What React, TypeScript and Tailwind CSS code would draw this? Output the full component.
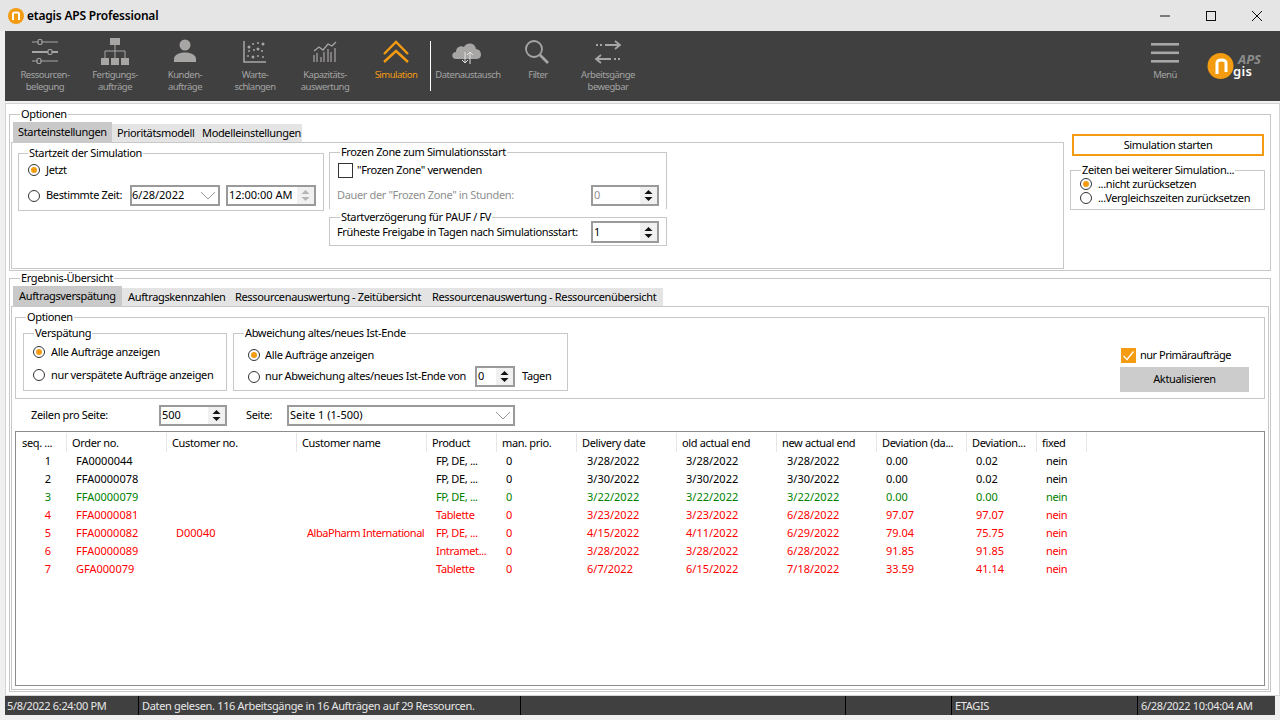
import React from "react";

const Radio = ({ on }: { on?: boolean }) => (
  <span className="w-[12px] h-[12px] shrink-0 rounded-full border border-[#333333] bg-white flex items-center justify-center">
    {on && <span className="w-[6px] h-[6px] rounded-full bg-[#f39c12]" />}
  </span>
);

const Group = ({ title, className, children, tx = "left-[10px]" }: { title: string; className: string; children?: React.ReactNode; tx?: string }) => (
  <div className={"relative border border-[#c8c8c8] " + className}>
    <span className={"absolute -top-[8px] bg-white px-[1px] leading-[14px] whitespace-nowrap " + tx}>{title}</span>
    {children}
  </div>
);

const Spin = ({ value, className, muted, time }: { value: string; className: string; muted?: boolean; time?: boolean }) => (
  <div className={"border-2 border-[#9a9a9a] bg-white flex items-stretch shrink-0 tracking-normal " + className}>
    <span className={"flex-1 pl-[1px] flex items-center whitespace-nowrap " + (muted ? "text-[#8f8f8f]" : "text-black")}>{value}</span>
    <span className="w-[17px] bg-[#f0f0f0] flex items-center justify-center">
      <svg width="9" height="13" viewBox="0 0 9 13">
        <path d="M4.5 1 L8.5 5 H0.5 Z M4.5 12 L8.5 8 H0.5 Z" fill={time ? "#b5b5b5" : "#111111"} />
      </svg>
    </span>
  </div>
);

const Chevron = () => (
  <svg width="16" height="9" viewBox="0 0 16 9" className="shrink-0">
    <path d="M1 1 L8 8 L15 1" fill="none" stroke="#9a9a9a" strokeWidth="1" />
  </svg>
);

const G = "#a8a5a5";

const icons: Record<string, React.ReactNode> = {
  sliders: (
    <g stroke={G} fill="none" strokeWidth="1.2">
      <path d="M7 5H13M17 5H33" />
      <rect x="13" y="2.5" width="4" height="5" rx="1.5" />
      <path d="M7 15H23M27 15H33" strokeWidth="1.8" />
      <rect x="23" y="12.5" width="4" height="5" rx="1.5" />
      <path d="M7 24H12M16 24H33" />
      <rect x="12" y="21.5" width="4" height="5" rx="1.5" />
    </g>
  ),
  org: (
    <g fill={G}>
      <rect x="15" y="1" width="10" height="7" />
      <rect x="6" y="21" width="8" height="7" />
      <rect x="16" y="21" width="8" height="7" />
      <rect x="26" y="21" width="8" height="7" />
      <path d="M20 8V21M10 21V14H30V21" fill="none" stroke={G} strokeWidth="1" />
    </g>
  ),
  person: (
    <g fill={G}>
      <circle cx="20" cy="8" r="5.5" />
      <path d="M9 25V22C9 18 14 15.5 20 15.5C26 15.5 31 18 31 22V25Z" />
    </g>
  ),
  scatter: (
    <g fill={G}>
      <path d="M9 4V25H31" fill="none" stroke={G} strokeWidth="1.5" />
      {[[14, 10], [18, 7], [23, 6], [28, 7], [14, 14], [19, 13], [23, 12], [27, 14], [13, 19], [18, 20], [23, 19], [28, 20]].map(([x, y], i) => (
        <circle key={i} cx={x} cy={y} r={i % 3 === 0 ? 1.5 : 1} />
      ))}
    </g>
  ),
  chart: (
    <g fill="none" stroke={G}>
      <path d="M9 14L14 10L18 13L23 7L27 9L31 5" strokeWidth="1.3" />
      <path d="M9 25V18M12 25V16M16 25V20M19 25V15M23 25V12M26 25V15M30 25V11" strokeWidth="1.2" />
    </g>
  ),
  sim: (
    <g fill="none" stroke="#f39c12" strokeWidth="2.4">
      <path d="M8 17L20 5L32 17" />
      <path d="M8 25L20 14L32 25" />
    </g>
  ),
  cloud: (
    <g>
      <path d="M8 22C3 22 3 15 8 15C8 10 13 8 16 10C18 5 27 5 28 12C34 12 35 22 29 22Z" fill={G} />
      <path d="M17 15V26M14 23L17 26L20 23M22 27V15M19 18L22 15L25 18" fill="none" stroke="#e0e0e0" strokeWidth="1" />
    </g>
  ),
  search: (
    <g fill="none" stroke={G}>
      <circle cx="16" cy="12" r="8" strokeWidth="1.8" />
      <path d="M22 18L30 26" strokeWidth="2.6" />
    </g>
  ),
  arrows: (
    <g fill="none" stroke={G} strokeWidth="1.8">
      <path d="M8 8H10M12 8H14M17 8H32M27 4L32 8L27 12" />
      <path d="M32 22H30M28 22H26M23 22H8M13 18L8 22L13 26" />
    </g>
  ),
  menu: (
    <g fill={G}>
      <rect x="6" y="6" width="28" height="2.6" />
      <rect x="6" y="14.5" width="28" height="2.6" />
      <rect x="6" y="23" width="28" height="2.6" />
    </g>
  ),
};

const Tool = ({ icon, label, active }: { icon: string; label: string[]; active?: boolean }) => (
  <div className="w-[70px] shrink-0 flex flex-col items-center">
    <svg width="40" height="30" viewBox="0 0 40 30">{icons[icon]}</svg>
    <div className={"mt-[2px] text-center text-[9.5px] leading-[12px] tracking-[-0.5px] " + (active ? "text-[#f39c12]" : "text-[#a3a3a3]")}>
      {label.map((l) => (
        <div key={l}>{l}</div>
      ))}
    </div>
  </div>
);

const Tab = ({ label, active, w }: { label: string; active?: boolean; w: string }) => (
  <div className={"flex items-center whitespace-nowrap " + w + (active ? " h-[20px] bg-[#c9c9c9]" : " h-[18px] bg-[#e4e4e4]")}>{label}</div>
);

const cols = ["seq. ...", "Order no.", "Customer no.", "Customer name", "Product", "man. prio.", "Delivery date", "old actual end", "new actual end", "Deviation (da...", "Deviation...", "fixed"];
const rows: { c: string; v: string[] }[] = [
  { c: "text-black", v: ["1", "FA0000044", "", "", "FP, DE, ...", "0", "3/28/2022", "3/28/2022", "3/28/2022", "0.00", "0.02", "nein"] },
  { c: "text-black", v: ["2", "FFA0000078", "", "", "FP, DE, ...", "0", "3/30/2022", "3/30/2022", "3/30/2022", "0.00", "0.02", "nein"] },
  { c: "text-[#008000]", v: ["3", "FFA0000079", "", "", "FP, DE, ...", "0", "3/22/2022", "3/22/2022", "3/22/2022", "0.00", "0.00", "nein"] },
  { c: "text-[#ff0000]", v: ["4", "FFA0000081", "", "", "Tablette", "0", "3/23/2022", "3/23/2022", "6/28/2022", "97.07", "97.07", "nein"] },
  { c: "text-[#ff0000]", v: ["5", "FFA0000082", "D00040", "AlbaPharm International", "FP, DE, ...", "0", "4/15/2022", "4/11/2022", "6/29/2022", "79.04", "75.75", "nein"] },
  { c: "text-[#ff0000]", v: ["6", "FFA0000089", "", "", "Intramet...", "0", "3/28/2022", "3/28/2022", "6/28/2022", "91.85", "91.85", "nein"] },
  { c: "text-[#ff0000]", v: ["7", "GFA000079", "", "", "Tablette", "0", "6/7/2022", "6/15/2022", "7/18/2022", "33.59", "41.14", "nein"] },
];
const grid = "grid grid-cols-[50px_100px_130px_130px_70px_80px_100px_100px_100px_90px_70px_50px] w-[1070px]";

const cellClass = (i: number) => {
  if (i === 0) return "text-right pr-[16px] tracking-normal";
  if (i === 3) return "pl-[10px] whitespace-nowrap tracking-[-0.45px]";
  if (i === 4 || i === 11) return "pl-[9px] whitespace-nowrap";
  if (i === 6 || i === 8) return "pl-[10px] whitespace-nowrap tracking-normal";
  return "pl-[9px] whitespace-nowrap tracking-normal";
};

export default function App() {
  return (
    <div className="w-[1280px] h-[720px] overflow-hidden bg-[#f0f0f0] text-[11px] tracking-[-0.35px] text-black font-['Noto_Sans',sans-serif]">
      {/* title bar */}
      <div className="h-[31px] bg-[#e5e5e5] flex items-center">
        <svg width="16" height="16" viewBox="0 0 16 16" className="ml-[8px]">
          <circle cx="8" cy="8" r="8" fill="#f39c12" />
          <path d="M5 12V5.5C5 4 11 4 11 5.5V12" fill="none" stroke="#ffffff" strokeWidth="2" />
        </svg>
        <span className="ml-[3px] text-[12px] font-semibold tracking-[-0.2px]">etagis APS Professional</span>
        <div className="ml-auto flex">
          <div className="w-[46px] h-[31px] flex items-center justify-center">
            <svg width="12" height="12" viewBox="0 0 12 12"><path d="M1 6H11" stroke="#111" strokeWidth="1" /></svg>
          </div>
          <div className="w-[46px] h-[31px] flex items-center justify-center">
            <svg width="12" height="12" viewBox="0 0 12 12"><rect x="1.5" y="1.5" width="9" height="9" fill="none" stroke="#111" strokeWidth="1" /></svg>
          </div>
          <div className="w-[46px] h-[31px] flex items-center justify-center">
            <svg width="12" height="12" viewBox="0 0 12 12"><path d="M1 1L11 11M11 1L1 11" stroke="#111" strokeWidth="1" /></svg>
          </div>
        </div>
      </div>

      {/* toolbar */}
      <div className="ml-[5px] h-[70px] bg-[#404040] flex pt-[6px] pl-[5px]">
        <Tool icon="sliders" label={["Ressourcen-", "belegung"]} />
        <Tool icon="org" label={["Fertigungs-", "aufträge"]} />
        <Tool icon="person" label={["Kunden-", "aufträge"]} />
        <Tool icon="scatter" label={["Warte-", "schlangen"]} />
        <Tool icon="chart" label={["Kapazitäts-", "auswertung"]} />
        <div className="ml-[1px]"><Tool icon="sim" label={["Simulation"]} active /></div>
        <div className="w-[1px] h-[50px] mt-[4px] ml-[-1px] bg-white" />
        <div className="ml-[2px]"><Tool icon="cloud" label={["Datenaustausch"]} /></div>
        <Tool icon="search" label={["Filter"]} />
        <Tool icon="arrows" label={["Arbeitsgänge", "bewegbar"]} />
        <div className="ml-auto"><Tool icon="menu" label={["Menü"]} /></div>
        <div className="relative w-[80px] h-[50px] shrink-0">
          <svg width="28" height="28" viewBox="0 0 28 28" className="absolute left-[7px] top-[15px]">
            <circle cx="13.5" cy="14" r="13" fill="#f39c12" />
            <path d="M10 22V11C10 7 19 7 19 11V20" fill="none" stroke="#ffffff" strokeWidth="3" />
          </svg>
          <span className="absolute left-[38px] top-[16px] text-[13px] leading-[12px] font-bold italic tracking-normal text-[#8c8c8c]">APS</span>
          <span className="absolute left-[33px] top-[28px] text-[13px] leading-[12px] font-semibold tracking-[0.3px] text-white">gis</span>
        </div>
      </div>

      {/* main */}
      <div className="ml-[5px] mt-[2px] h-[593px] border border-[#d4d4d4] bg-white pl-[3px] pr-[8px] pt-[10px]">
        <Group title="Optionen" className="h-[157px] flex pt-[7px]">
          <div className="ml-[1px] w-[1053px] shrink-0">
            <div className="h-[20px] flex items-end pl-[2px]">
              <Tab label="Starteinstellungen" active w="w-[99px] pl-[5px]" />
              <Tab label="Prioritätsmodell" w="w-[85px] pl-[5px]" />
              <Tab label="Modelleinstellungen" w="w-[105px] pl-[5px]" />
            </div>
            <div className="h-[127px] border border-[#c8c8c8] flex items-start pl-[6px] pt-[10px]">
              <Group title="Startzeit der Simulation" tx="left-[9px]" className="w-[306px] h-[58px] pl-[9px] pt-[6px]">
                <div className="h-[20px] flex items-center gap-[6px]"><Radio on /><span>Jetzt</span></div>
                <div className="mt-[5px] flex items-center">
                  <div className="w-[102px] flex items-center gap-[6px]"><Radio /><span>Bestimmte Zeit:</span></div>
                  <div className="w-[90px] h-[21px] border-2 border-[#9a9a9a] flex items-center justify-between pr-[2px] tracking-normal"><span>6/28/2022</span><Chevron /></div>
                  <Spin value="12:00:00 AM" time className="ml-[6px] w-[90px] h-[21px]" />
                </div>
              </Group>
              <div className="ml-[5px] -mt-[1px] w-[338px]">
                <Group title="Frozen Zone zum Simulationsstart" className="h-[57px] border-b-0 pt-[10px]">
                  <div className="h-[14px] pl-[8px] flex items-center gap-[4px]">
                    <span className="w-[15px] h-[15px] border border-[#333333] shrink-0" />
                    <span>"Frozen Zone" verwenden</span>
                  </div>
                  <div className="mt-[8px] pl-[7px] pr-[7px] flex items-center justify-between">
                    <span className="text-[#8f8f8f]">Dauer der "Frozen Zone" in Stunden:</span>
                    <Spin value="0" muted className="w-[68px] h-[21px]" />
                  </div>
                </Group>
                <Group title="Startverzögerung für PAUF / FV" className="mt-[8px] h-[29px] pt-[3px] pl-[7px] pr-[7px] flex items-start justify-between">
                  <span className="leading-[22px] whitespace-nowrap">Früheste Freigabe in Tagen nach Simulationsstart:</span>
                  <Spin value="1" className="w-[68px] h-[22px]" />
                </Group>
              </div>
            </div>
          </div>
          <div className="flex-1">
            <div className="ml-[8px] mt-[12px] w-[192px] h-[22px] border-2 border-[#f39c12] flex items-center justify-center">Simulation starten</div>
            <Group title="Zeiten bei weiterer Simulation..." className="ml-[6px] mt-[14px] w-[195px] h-[40px] pt-[6px] pl-[9px]">
              <div className="h-[14px] flex items-center gap-[6px]"><Radio on /><span>...nicht zurücksetzen</span></div>
              <div className="h-[14px] flex items-center gap-[6px]"><Radio /><span>...Vergleichszeiten zurücksetzen</span></div>
            </Group>
          </div>
        </Group>

        <Group title="Ergebnis-Übersicht" className="mt-[7px] h-[414px] pt-[7px]">
          <div className="h-[20px] flex items-end pl-[3px]">
            <Tab label="Auftragsverspätung" active w="w-[109px] pl-[6px]" />
            <Tab label="Auftragskennzahlen" w="w-[107px] pl-[6px]" />
            <Tab label="Ressourcenauswertung - Zeitübersicht" w="w-[197px] pl-[6px]" />
            <Tab label="Ressourcenauswertung - Ressourcenübersicht" w="w-[237px] pl-[6px]" />
          </div>
          <div className="ml-[1px] w-[1258px] h-[384px] border border-[#c8c8c8] pl-[3px] pt-[10px]">
            <Group title="Optionen" className="w-[1250px] h-[82px] flex items-start pl-[7px] pt-[15px]">
              <Group title="Verspätung" className="w-[204px] h-[58px] pl-[9px] pt-[11px]">
                <div className="h-[14px] flex items-center gap-[6px]"><Radio on /><span>Alle Aufträge anzeigen</span></div>
                <div className="mt-[9px] h-[14px] flex items-center gap-[6px]"><Radio /><span>nur verspätete Aufträge anzeigen</span></div>
              </Group>
              <Group title="Abweichung altes/neues Ist-Ende" className="ml-[6px] w-[335px] h-[58px] pl-[14px] pt-[14px]">
                <div className="h-[14px] flex items-center gap-[5px]"><Radio on /><span>Alle Aufträge anzeigen</span></div>
                <div className="mt-[4px] flex items-center">
                  <div className="w-[227px] flex items-center gap-[5px]"><Radio /><span className="whitespace-nowrap">nur Abweichung altes/neues Ist-Ende von</span></div>
                  <Spin value="0" className="w-[40px] h-[21px]" />
                  <span className="ml-[7px]">Tagen</span>
                </div>
              </Group>
              <div className="ml-auto mr-[15px] mt-[14px] w-[129px]">
                <div className="flex items-center gap-[4px] pl-[1px]">
                  <span className="w-[15px] h-[15px] bg-[#f39c12] flex items-center justify-center shrink-0">
                    <svg width="13" height="13" viewBox="0 0 13 13"><path d="M1.5 7L5 10.5L11.5 2.5" fill="none" stroke="#ffffff" strokeWidth="1.2" /></svg>
                  </span>
                  <span className="tracking-[-0.5px]">nur Primäraufträge</span>
                </div>
                <div className="mt-[3px] h-[25px] bg-[#cccccc] flex items-center justify-center">Aktualisieren</div>
              </div>
            </Group>
            <div className="mt-[6px] flex items-center h-[21px]">
              <span className="ml-[16px] w-[128px]">Zeilen pro Seite:</span>
              <Spin value="500" className="w-[68px] h-[21px]" />
              <span className="ml-[19px] w-[41px]">Seite:</span>
              <div className="w-[228px] h-[21px] border-2 border-[#9a9a9a] flex items-center justify-between pl-[1px] pr-[2px] tracking-normal"><span>Seite 1 (1-500)</span><Chevron /></div>
            </div>
            <div className="mt-[5px] w-[1250px] h-[255px] border border-[#8c8c8c] p-[1px] bg-white">
              <div className={grid + " h-[19px]"}>
                {cols.map((c) => (
                  <div key={c} className="pl-[5px] pt-[1px] border-r border-[#e6e6e6] flex items-center whitespace-nowrap overflow-hidden">{c}</div>
                ))}
              </div>
              {rows.map((r) => (
                <div key={r.v[0]} className={grid + " h-[18px] items-center " + r.c}>
                  {r.v.map((t, i) => (
                    <div key={i} className={cellClass(i)}>{t}</div>
                  ))}
                </div>
              ))}
            </div>
          </div>
        </Group>
      </div>

      {/* status */}
      <div className="ml-[5px] w-[1270px] h-[19px] bg-[#404040] flex text-[11px] text-[#e8e8e8] tracking-[-0.33px]">
        <div className="w-[134px] pl-[2px] border-r border-black leading-[19px] whitespace-nowrap">5/8/2022 6:24:00 PM</div>
        <div className="w-[382px] pl-[3px] border-r border-black leading-[19px] whitespace-nowrap">Daten gelesen. 116 Arbeitsgänge in 16 Aufträgen auf 29 Ressourcen.</div>
        <div className="w-[325px] border-r border-black" />
        <div className="w-[106px] border-r border-black" />
        <div className="w-[186px] pl-[3px] border-r border-black leading-[19px]">ETAGIS</div>
        <div className="flex-1 pl-[3px] leading-[19px] whitespace-nowrap">6/28/2022 10:04:04 AM</div>
      </div>
    </div>
  );
}
